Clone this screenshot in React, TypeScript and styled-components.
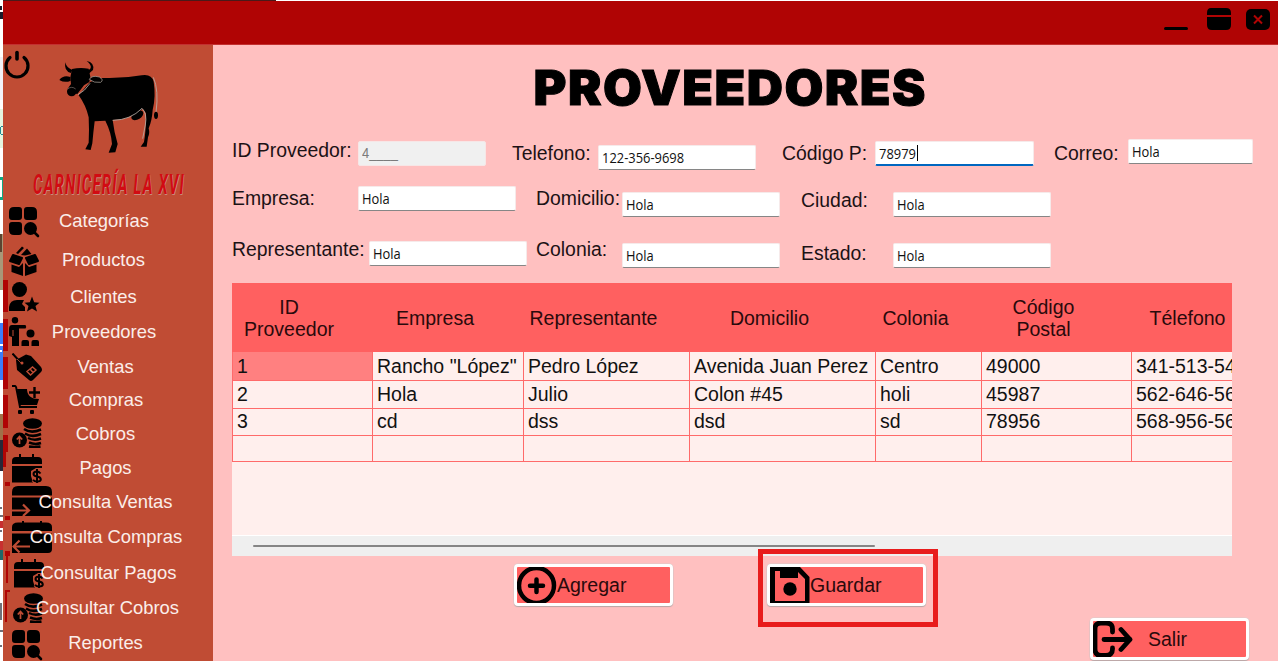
import React from 'react';
import styled, { createGlobalStyle } from 'styled-components';

const Global = createGlobalStyle`
  * { box-sizing: border-box; }
  body { margin: 0; background: #fff; font-family: "Liberation Sans", Arial, sans-serif; overflow: hidden; }
`;

const Screen = styled.div`
  display: flex;
  width: 1278px;
  height: 661px;
  overflow: hidden;
  background: #fff;
`;
const Desktop = styled.svg`
  flex: none;
  display: block;
`;
const Window = styled.div`
  flex: 1;
  display: flex;
  flex-direction: column;
  min-width: 0;
`;
const BackEdge = styled.div`
  width: 273px;
  height: 1px;
  flex: none;
  background: #4a1a1a;
`;
const TitleBar = styled.header`
  height: 44px;
  flex: none;
  display: flex;
  justify-content: flex-end;
  align-items: flex-start;
  padding: 7px 8.5px 0 0;
  background: #b00404;
  border-bottom: 1px solid #c33030;
`;
const Body = styled.div`
  flex: 1;
  display: flex;
  min-height: 0;
`;
const Sidebar = styled.nav`
  position: relative;
  width: 210px;
  flex: none;
  background: #c04c34;
`;
const SideHead = styled.div`
  display: flex;
  align-items: flex-start;
  height: 126px;
`;
const PowerIcon = styled.svg`
  margin: 5px 0 0 0;
  flex: none;
`;
const Cow = styled.svg`
  margin: 14px 0 0 24px;
  flex: none;
`;
const Brand = styled.div`
  height: 33px;
  padding-left: 30px;
  font: italic 700 27px/29px Roboto, sans-serif;
  letter-spacing: 2px;
  white-space: nowrap;
  color: #d20b12;
  text-shadow: 1px 1px 0 #c98a7c;
  span { display: inline-block; transform: scaleX(0.557); transform-origin: 0 50%; }
`;
const Accents = styled.svg`
  position: absolute;
  left: 0;
  top: 0;
`;
const MenuItem = styled.div<{ $h: number }>`
  position: relative;
  display: grid;
  height: ${p => p.$h}px;
`;
const IconSlot = styled.div<{ $x: number; $y: number }>`
  grid-area: 1 / 1;
  margin: ${p => p.$y}px 0 0 ${p => p.$x}px;
  line-height: 0;
  svg { display: block; }
`;
const MenuText = styled.span<{ $c: number; $y: number }>`
  grid-area: 1 / 1;
  width: ${p => p.$c * 2}px;
  margin-top: ${p => p.$y}px;
  height: 24px;
  text-align: center;
  font-size: 18.4px;
  line-height: 24px;
  color: #fbeeea;
  white-space: nowrap;
`;
const Main = styled.main`
  flex: 1;
  min-width: 0;
  background: #ffc0c0;
  padding-left: 19px;
  display: flex;
  flex-direction: column;
`;
const Title = styled.h1`
  margin: 0;
  height: 93px;
  width: 997px;
  padding-top: 13px;
  text-align: center;
  font: 900 48px/60px Inter, "Liberation Sans", sans-serif;
  letter-spacing: 1.4px;
  color: #000;
  -webkit-text-stroke: 1px #000;
  span { display: inline-block; transform: scaleX(1.045); }
`;
const FormRow = styled.div<{ $h: number }>`
  display: flex;
  align-items: flex-start;
  height: ${p => p.$h}px;
`;
const Label = styled.label<{ $w: number; $y: number }>`
  width: ${p => p.$w}px;
  margin-top: ${p => p.$y}px;
  flex: none;
  font-size: 19.4px;
  line-height: 24px;
  color: #1c1215;
  white-space: nowrap;
`;
const Field = styled.div<{ $w: number; $y: number; $gap: number; $state?: 'disabled' | 'focus' }>`
  width: ${p => p.$w}px;
  height: 25px;
  margin: ${p => p.$y}px ${p => p.$gap}px 0 0;
  flex: none;
  display: flex;
  align-items: center;
  padding: 0 0 1px 3px;
  border: 1px solid ${p => (p.$state === 'disabled' ? '#f7e6e6' : '#f6eaea')};
  border-bottom: ${p => (p.$state === 'focus' ? '2px solid #0067c0' : p.$state === 'disabled' ? '1px solid #f7e6e6' : '1px solid #868686')};
  border-radius: 2px;
  background: ${p => (p.$state === 'disabled' ? '#f0f0f0' : '#fff')};
  color: ${p => (p.$state === 'disabled' ? '#7b7b7b' : '#111')};
  font: 15px/20px ${p => (p.$state === 'disabled' ? '"Liberation Sans"' : '"Open Sans"')}, sans-serif;
  white-space: nowrap;
  span { display: inline-block; transform: scaleX(0.86); transform-origin: 0 50%; }
`;
const Caret = styled.i`
  width: 1px;
  height: 16px;
  margin-left: -5px;
  background: #000;
`;
const Grid = styled.div`
  width: 1000px;
  height: 273px;
  flex: none;
  display: flex;
  flex-direction: column;
  overflow: hidden;
  background: #ffefed;
`;
const columns = '141px 151px 166px 186px 106px 150px 138px';
const HeadRow = styled.div`
  display: grid;
  grid-template-columns: ${columns};
  height: 69px;
  flex: none;
  background: #ff6060;
`;
const HeadCell = styled.div`
  display: flex;
  align-items: center;
  justify-content: center;
  text-align: center;
  padding-right: 27px;
  font-size: 19.5px;
  line-height: 22px;
  color: #2a0a0c;
  &:nth-child(6) span { max-width: 80px; }
`;
const Row = styled.div<{ $h: number }>`
  display: grid;
  grid-template-columns: ${columns};
  height: ${p => p.$h}px;
  flex: none;
`;
const Cell = styled.div<{ $selected?: boolean }>`
  border-right: 1px solid #ff6a6a;
  border-bottom: 1px solid #ff6a6a;
  padding-left: 4px;
  font-size: 19.5px;
  line-height: 28px;
  color: #111;
  white-space: nowrap;
  background: ${p => (p.$selected ? '#ff8080' : 'transparent')};
  &:first-child { border-left: 1px solid #ff6a6a; }
`;
const ScrollBar = styled.div`
  margin-top: auto;
  height: 21px;
  border-top: 1px solid #fff;
  background: #efefef;
  padding: 9px 0 0 21px;
`;
const Thumb = styled.div`
  width: 622px;
  height: 2px;
  border-radius: 1px;
  background: #858585;
`;
const Actions = styled.div<{ $h: number; $x: number; $y: number }>`
  display: flex;
  gap: 94px;
  height: ${p => p.$h}px;
  padding: ${p => p.$y}px 0 0 ${p => p.$x}px;
`;
const Button = styled.div<{ $gap?: number }>`
  position: relative;
  display: flex;
  align-items: center;
  gap: ${p => p.$gap ?? 0}px;
  width: 159px;
  height: 42px;
  flex: none;
  border: 3px solid #fff;
  border-radius: 4px;
  box-shadow: 0 1px 1px #b9a5a5, 0 0 0 0.5px #d9cccc;
  background: #ff6060;
  font-size: 19.5px;
  color: #2a0a0c;
  svg { flex: none; display: block; }
`;
const Highlight = styled.i`
  position: absolute;
  left: -12px;
  top: -18px;
  width: 180px;
  height: 78px;
  border: 5px solid #e81c1c;
`;

const icon = (w: number, h: number, body: React.ReactNode) => (
  <svg width={w} height={h} viewBox={`0 0 ${w} ${h}`}>{body}</svg>
);

const CategoryIcon = () => icon(31, 31, <>
  <path d="M5 0H10Q13 0 13 3V10Q13 13 10 13H3Q0 13 0 10V5Q0 0 5 0ZM18 0H23Q28 0 28 5V10Q28 13 25 13H18Q15 13 15 10V3Q15 0 18 0ZM3 15H10Q13 15 13 18V25Q13 28 10 28H5Q0 28 0 23V18Q0 15 3 15Z" />
  <circle cx="21.5" cy="21.5" r="6.5" />
  <path d="M25 25L29 29" stroke="#000" strokeWidth="2.6" strokeLinecap="round" />
</>);
const BoxIcon = () => icon(31, 31, <>
  <path d="M4 9L13 12L10 18L1 15ZM26 9L17 12L20 18L29 15Z" strokeLinejoin="round" stroke="#000" strokeWidth="2" />
  <path d="M2.500 18.500L10 21L14 17V30L2.500 26ZM27.500 18.500L20 21L16 17V30L27.500 26Z" />
  <path d="M7 7L13 0.500L15 2L9 8ZM12 9L18 2.500L22.500 8L16 9.500Z" />
</>);
const ClientIcon = () => icon(31, 31, <>
  <circle cx="10.500" cy="7.500" r="7.500" />
  <path d="M0 29V25Q1 18 8 18H15L13 22L16 25V29Z" />
  <path d="M23 14.500L25.200 20.200L30.500 20.700L26.500 24L28 29.500L23 26.400L18 29.500L19.500 24L15.500 20.700L20.800 20.200Z" />
</>);
const ProviderIcon = () => icon(31, 31, <>
  <circle cx="6" cy="3.200" r="3.200" />
  <path d="M3 8H16.500Q18 10 16.500 11.500H10V29H3V20L0 19V12Q0 8 3 8Z" />
  <path d="M4 13V19" stroke="#c04c34" strokeWidth="1" />
  <circle cx="21.500" cy="16.500" r="4" />
  <path d="M12.500 29V25Q12.500 23 14.500 23H18Q20 23 20 25V29ZM22.500 29V25Q22.500 23 24.500 23H28Q30 23 30 25V29Z" />
</>);
const TagIcon = () => icon(31, 30, <>
  <path d="M4 7L14 1.500L19 3L29 14Q31 17 29 19L21 27Q19 29 17 27L5 17Z" />
  <path d="M0.500 0.500L10 11" stroke="#000" strokeWidth="2" />
  <path d="M5 6L10 11" stroke="#c04c34" strokeWidth="0.800" />
  <circle cx="10" cy="10" r="1.500" fill="#c04c34" />
  <path d="M15 18.500L20.500 14L24 17L18.500 22ZM18.500 16.500L21 19.500" fill="none" stroke="#c04c34" strokeWidth="1.400" />
</>);
const CartIcon = () => icon(31, 30, <>
  <path d="M0 1H3Q4 1 4.500 4L8 22H25" fill="none" stroke="#000" strokeWidth="2" />
  <path d="M5 4H15Q15 14 27 14L25 20H8Z" />
  <path d="M22.500 2V13M17 7.500H28" stroke="#000" strokeWidth="2.400" />
  <rect x="6" y="25" width="4" height="4" rx="1" /><rect x="18" y="25" width="4" height="4" rx="1" />
</>);
const CoinsIcon = () => icon(31, 30, <>
  <ellipse cx="20.500" cy="5.500" rx="9.500" ry="5.300" />
  <path d="M12 11Q19 16 29 11.500M13 15.500Q20 20 29 16M16 20Q22 23 29 20.500M17 24.500Q23 27 29 25M17 28.500Q23 29.500 28.500 28.500" fill="none" stroke="#000" strokeWidth="2.500" />
  <circle cx="7.500" cy="22" r="7.500" />
  <path d="M7.500 26V19M4.800 21.500L7.500 18.500L10.200 21.500" fill="none" stroke="#c04c34" strokeWidth="1.700" />
</>);
const CalendarMoneyIcon = () => icon(31, 29, <>
  <path d="M4 3H26Q30 3 30 7V10H0V7Q0 3 4 3ZM7 0H9V4H7ZM20 0H22V4H20ZM0 12H30V14H24L19 17V22L21 28.500H0Z" />
  <path d="M28.500 19.500Q27 17.500 24.800 17.500Q21.500 17.500 21.500 20Q21.500 22 25 22.600Q28.800 23.200 28.800 25.500Q28.800 27.500 25 27.500Q22.500 27.500 21 25.800M25 15V29" fill="none" stroke="#c04c34" strokeWidth="3.600" />
  <path d="M28.500 19.500Q27 17.500 24.800 17.500Q21.500 17.500 21.500 20Q21.500 22 25 22.600Q28.800 23.200 28.800 25.500Q28.800 27.500 25 27.500Q22.500 27.500 21 25.800M25 15V29" fill="none" stroke="#000" strokeWidth="2" />
</>);
const CardRightIcon = () => icon(40, 31, <>
  <path d="M6 0H34Q40 0 40 6V9.500H0V6Q0 0 6 0ZM0 11.500H40V30H0Z" />
  <path d="M0 24.500H17M11 18.500L17 24.500L11 30" fill="none" stroke="#c04c34" strokeWidth="2.200" />
</>);
const CardLeftIcon = () => icon(40, 32, <>
  <path d="M6 1.500H34Q40 1.500 40 6V10H0V6Q0 1.500 6 1.500ZM10 0H12V3H10ZM28 0H30V3H28ZM0 12.500H40V28Q40 32 36 32H0Z" />
  <path d="M18 25.500H1M7.500 19.500L1.500 25.500L7.500 31.500" fill="none" stroke="#c04c34" strokeWidth="2.200" />
</>);

const menu = [
  { text: 'Categorías', h: 39, c: 101, ty: 5, x: 6, y: 3, Icon: CategoryIcon },
  { text: 'Productos', h: 37, c: 100.5, ty: 5, x: 6, y: 3, Icon: BoxIcon },
  { text: 'Clientes', h: 35, c: 100.5, ty: 5, x: 6, y: 2, Icon: ClientIcon },
  { text: 'Proveedores', h: 35, c: 101, ty: 5, x: 6, y: 2, Icon: ProviderIcon },
  { text: 'Ventas', h: 34, c: 102.5, ty: 5, x: 9, y: 3, Icon: TagIcon },
  { text: 'Compras', h: 33, c: 103, ty: 4, x: 9, y: 1, Icon: CartIcon },
  { text: 'Cobros', h: 34, c: 102.5, ty: 5, x: 9, y: 1, Icon: CoinsIcon },
  { text: 'Pagos', h: 35, c: 102.5, ty: 5, x: 9, y: 3, Icon: CalendarMoneyIcon },
  { text: 'Consulta Ventas', h: 34, c: 102.5, ty: 4, x: 9, y: 0, Icon: CardRightIcon },
  { text: 'Consulta Compras', h: 36, c: 103, ty: 5, x: 9, y: 1, Icon: CardLeftIcon },
  { text: 'Consultar Pagos', h: 35, c: 105.5, ty: 5, x: 11, y: 3, Icon: CalendarMoneyIcon },
  { text: 'Consultar Cobros', h: 35, c: 104.5, ty: 5, x: 10, y: 2, Icon: CoinsIcon },
  { text: 'Reportes', h: 35, c: 102.5, ty: 5, x: 9, y: 4, Icon: CategoryIcon },
];

const headers = ['ID Proveedor', 'Empresa', 'Representante', 'Domicilio', 'Colonia', 'Código Postal', 'Télefono'];
const rows = [
  { h: 28, cells: ['1', 'Rancho "López"', 'Pedro López', 'Avenida Juan Perez', 'Centro', '49000', '341-513-54'] },
  { h: 27, cells: ['2', 'Hola', 'Julio', 'Colon #45', 'holi', '45987', '562-646-56'] },
  { h: 28, cells: ['3', 'cd', 'dss', 'dsd', 'sd', '78956', '568-956-56'] },
  { h: 27, cells: ['', '', '', '', '', '', ''] },
];

export default function App() {
  return (
    <Screen>
      <Global />
      <Desktop width="3" height="661">
        <path d="M0 6H2V10H0ZM0 12H3V19H0Z" fill="#1b1b2b" />
        <path d="M0 57H3V100H0Z" fill="#f2f2f8" />
        <path d="M0 109H3V148H0Z" fill="#e4f5e0" />
        <path d="M1 126H3V127H1ZM0 127H1V134H0ZM1 134H3V135H1Z" fill="#208890" />
        <path d="M0 177H3V180H0ZM2 180H3V199H2ZM0 197H3V200H0Z" fill="#10a880" />
        <path d="M0 234H3V290H0Z" fill="#a89878" />
        <path d="M0 234H2V252H0Z" fill="#5c4430" />
        <path d="M0 323H3V380H0Z" fill="#3c7cf8" />
        <path d="M0 344H3V346H0ZM0 350H2V352H0Z" fill="#fff" />
        <path d="M0 414H3V440H0Z" fill="#a07048" />
        <path d="M0 440H3V471H0Z" fill="#282838" />
        <path d="M0 507H2V509H0ZM0 515H3V517H0ZM0 530H2V532H0ZM0 603H2V620H0ZM0 630H3V632H0ZM0 645H2V647H0Z" fill="#707078" />
        <path d="M0 521H3V528H0ZM0 541H3V550H0Z" fill="#c83030" />
        <path d="M0 550H3V560H0Z" fill="#206868" />
      </Desktop>
      <Window>
        <BackEdge />
        <TitleBar>
          <svg width="106" height="24" viewBox="0 0 106 24">
            <rect x="0" y="19" width="24" height="3" rx="1.500" />
            <path d="M47 0H62Q67 0 67 5V7H43V5Q43 0 47 0ZM43 9H67V17Q67 22 62 22H48Q43 22 43 17Z" />
            <rect x="82" y="1" width="24" height="21" rx="5" />
            <path d="M90 7.500L98 15.500M98 7.500L90 15.500" stroke="#b00404" strokeWidth="2" />
          </svg>
        </TitleBar>
        <Body>
          <Sidebar>
            <Accents width="10" height="616">
              <path fill="#b00404" d="M0 235H5V267H0ZM0 274H5V306H0ZM0 312H5V344H0ZM0 350H5V383H0ZM0 390H5V407H3V422H0ZM2 437H7V441H2ZM2 471H7V475H2ZM2 506H7V511H5V538H3V511H2ZM2 545H7V547H4V577H2Z" />
            </Accents>
            <SideHead>
              <PowerIcon width="28" height="30" viewBox="0 0 28 30">
                <path d="M7 7.500A11 11 0 1 0 21 7.500" fill="none" stroke="#000" strokeWidth="3.200" strokeLinecap="round" />
                <path d="M14 2.500V9" stroke="#000" strokeWidth="3.600" strokeLinecap="round" />
              </PowerIcon>
              <Cow width="104" height="98" viewBox="165 177 312 294">
                <path d="M216 207Q240 202 266 206L271 230L268 246L252 256L232 282L202 276L206 262L213 252L211 232Z" />
                <path d="M270 246L308 234Q370 236 425 226Q455 221 461 245Q468 290 458 330Q456 362 446 385Q450 400 444 412L440 440H422L432 426Q438 395 438 340L428 326Q400 350 365 358L338 360Q342 395 353 432L346 457L326 458L336 432Q334 398 316 362L284 364Q280 395 277 430L272 450L256 448L266 428Q268 390 266 352Q258 316 236 286Z" />
                <path d="M213 219Q191 214 196 187Q199 203 217 210ZM262 212Q284 203 260 183Q284 187 279 210L268 220ZM178 240Q190 224 211 231L212 242Q195 250 178 240Z" />
                <path d="M268 238Q275 225 298 231Q313 240 302 247Q282 250 268 238Z" stroke="#b8b0a8" strokeWidth="2" />
                <ellipse cx="215" cy="275" rx="14" ry="14" />
                <path d="M203 267Q215 257 227 267" fill="none" stroke="#a89890" strokeWidth="1.500" />
                <ellipse cx="412" cy="346" rx="20" ry="12" transform="rotate(-32 412 346)" />
                <path d="M234 284Q255 273 270 250M338 361Q392 360 426 325Q442 340 436 375L428 416M460 232Q477 270 468 338" fill="none" stroke="#b8b0a8" strokeWidth="2.500" />
                <ellipse cx="468" cy="346" rx="6" ry="11" />
              </Cow>
            </SideHead>
            <Brand><span>CARNICERÍA LA XVI</span></Brand>
            {menu.map(({ text, h, c, ty, x, y, Icon }) => (
              <MenuItem key={text} $h={h}>
                <IconSlot $x={x} $y={y}><Icon /></IconSlot>
                <MenuText $c={c} $y={ty}>{text}</MenuText>
              </MenuItem>
            ))}
          </Sidebar>
          <Main>
            <Title><span>PROVEEDORES</span></Title>
            <FormRow $h={48}>
              <Label $w={126} $y={0}>ID Proveedor:</Label>
              <Field $w={128} $y={3} $gap={26} $state="disabled"><span>4____</span></Field>
              <Label $w={86} $y={3}>Telefono:</Label>
              <Field $w={158} $y={7} $gap={26}><span>122-356-9698</span></Field>
              <Label $w={93} $y={3}>Código P:</Label>
              <Field $w={159} $y={3} $gap={20} $state="focus"><span>78979</span><Caret /></Field>
              <Label $w={74} $y={3}>Correo:</Label>
              <Field $w={125} $y={1} $gap={0}><span>Hola</span></Field>
            </FormRow>
            <FormRow $h={51}>
              <Label $w={126} $y={0}>Empresa:</Label>
              <Field $w={158} $y={0} $gap={20}><span>Hola</span></Field>
              <Label $w={86} $y={0}>Domicilio:</Label>
              <Field $w={158} $y={6} $gap={21}><span>Hola</span></Field>
              <Label $w={92} $y={2}>Ciudad:</Label>
              <Field $w={158} $y={6} $gap={0}><span>Hola</span></Field>
            </FormRow>
            <FormRow $h={46}>
              <Label $w={137} $y={0}>Representante:</Label>
              <Field $w={158} $y={4} $gap={9}><span>Hola</span></Field>
              <Label $w={86} $y={0}>Colonia:</Label>
              <Field $w={158} $y={6} $gap={21}><span>Hola</span></Field>
              <Label $w={92} $y={4}>Estado:</Label>
              <Field $w={158} $y={6} $gap={0}><span>Hola</span></Field>
            </FormRow>
            <Grid>
              <HeadRow>{headers.map(h => <HeadCell key={h}><span>{h}</span></HeadCell>)}</HeadRow>
              {rows.map((r, i) => (
                <Row key={i} $h={r.h}>
                  {r.cells.map((c, j) => <Cell key={j} $selected={i === 0 && j === 0}>{c}</Cell>)}
                </Row>
              ))}
              <ScrollBar><Thumb /></ScrollBar>
            </Grid>
            <Actions $h={62} $x={282} $y={8}>
              <Button>
                <svg width="40" height="36" viewBox="0 0 40 36">
                  <circle cx="19.500" cy="18.500" r="17.500" fill="none" stroke="#000" strokeWidth="4.500" />
                  <path d="M19.500 12.500V25M13 18.700H26" stroke="#000" strokeWidth="4.500" strokeLinecap="round" />
                </svg>
                Agregar
              </Button>
              <Button>
                <svg width="40" height="36" viewBox="0 0 40 36">
                  <path fillRule="evenodd" d="M0 0H30L39.500 10V36H0ZM5 4V34H35V12L28 5V11H10V4Z" />
                  <circle cx="20" cy="22" r="6.700" />
                </svg>
                Guardar
                <Highlight />
              </Button>
            </Actions>
            <Actions $h={43} $x={858} $y={0}>
              <Button $gap={15}>
                <svg width="40" height="36" viewBox="0 0 40 36">
                  <path d="M19.500 11V8Q19.500 2 13 2H8Q2 2 2 8V28Q2 34.500 8 34.500H13Q19.500 34.500 19.500 28V27" fill="none" stroke="#000" strokeWidth="4.800" strokeLinecap="round" />
                  <path d="M11 18.500H37M28 8.500L37 18.500L28 28.500" fill="none" stroke="#000" strokeWidth="4.800" strokeLinecap="round" strokeLinejoin="round" />
                </svg>
                Salir
              </Button>
            </Actions>
          </Main>
        </Body>
      </Window>
    </Screen>
  );
}
